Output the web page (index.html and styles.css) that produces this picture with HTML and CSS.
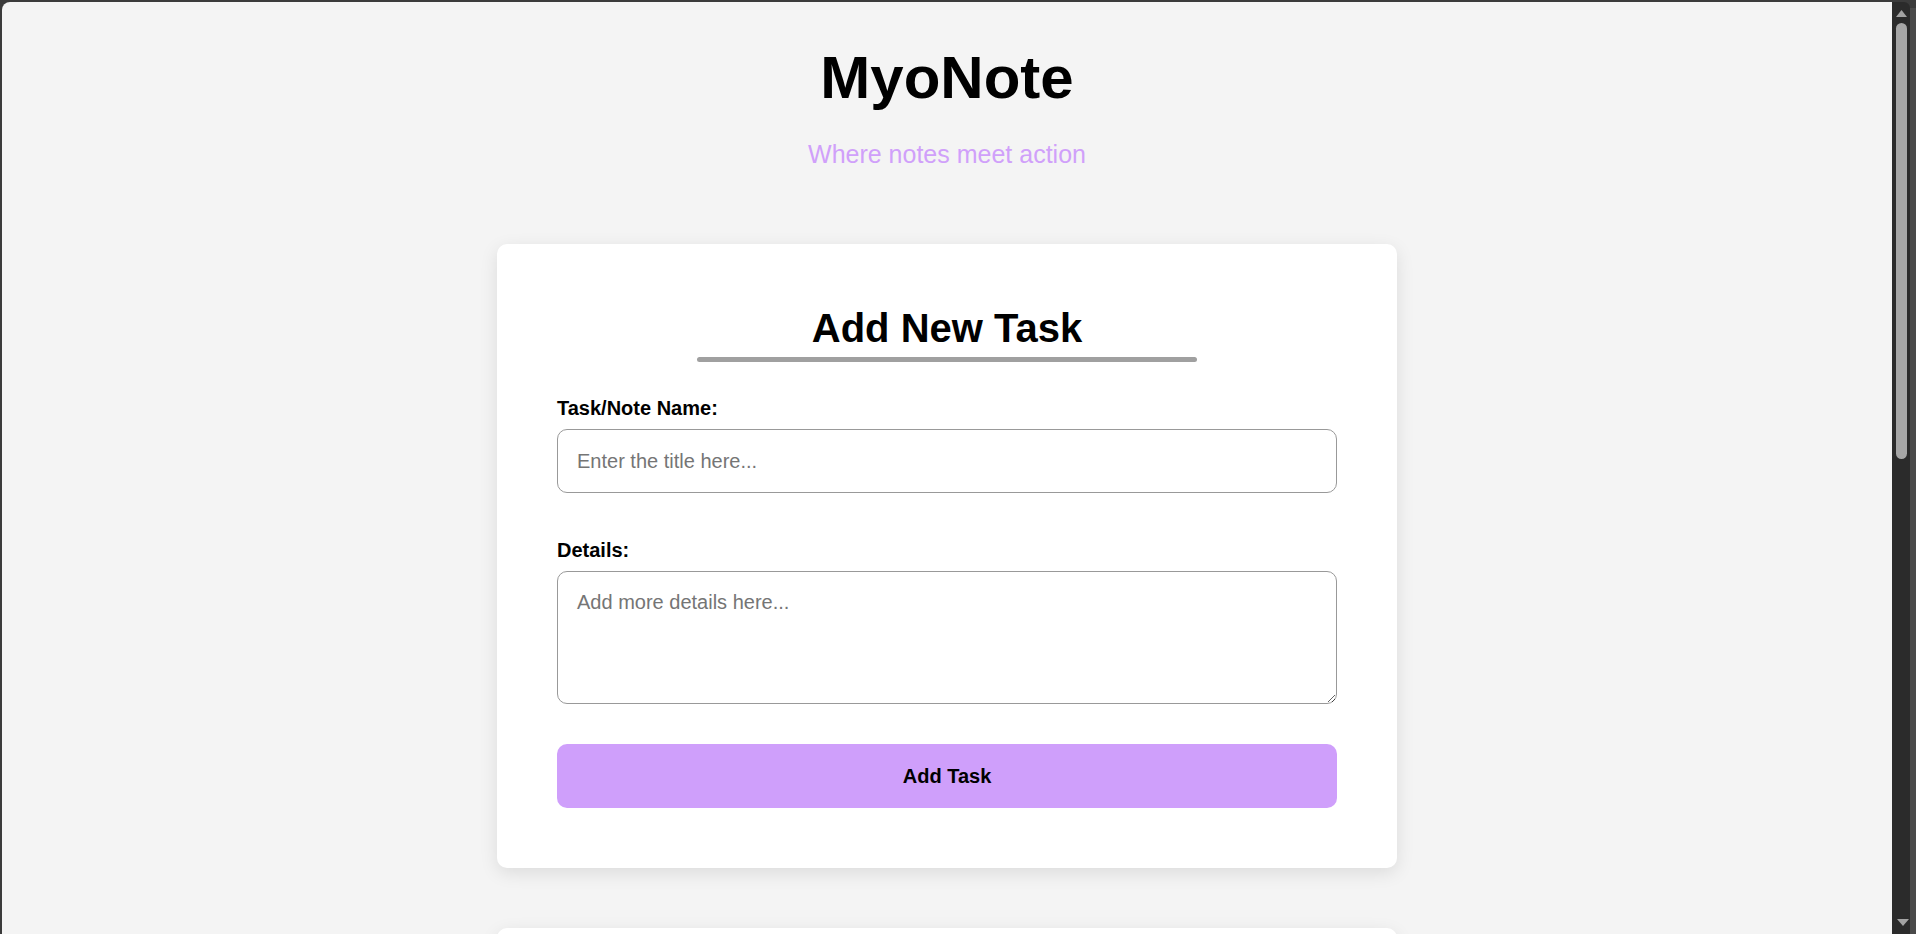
FILE: index.html
```html
<!DOCTYPE html>
<html lang="en">
<head>
<meta charset="utf-8">
<title>MyoNote</title>
<link rel="stylesheet" href="styles.css">
</head>
<body>
<div class="window">
  <main class="page">
    <header class="masthead">
      <h1 class="brand">MyoNote</h1>
      <p class="tagline">Where notes meet action</p>
    </header>

    <section class="card">
      <h2 class="card-title">Add New Task</h2>
      <form class="task-form">
        <label class="field-label" for="title">Task/Note Name:</label>
        <input class="field-input" id="title" type="text" placeholder="Enter the title here...">

        <label class="field-label field-label-spaced" for="details">Details:</label>
        <textarea class="field-textarea" id="details" placeholder="Add more details here..."></textarea>

        <button class="submit-btn" type="button">Add Task</button>
      </form>
    </section>

    <section class="card card-list"></section>
  </main>

  <div class="scrollbar" aria-hidden="true">
    <div class="scroll-track">
      <svg class="scroll-arrow" width="11" height="8" viewBox="0 0 11 8"><polygon points="5.5,0 11,7 0,7" fill="#a3a3a3"/></svg>
      <div class="scroll-thumb"></div>
      <div class="scroll-spacer"></div>
      <svg class="scroll-arrow" width="12" height="7" viewBox="0 0 12 7"><polygon points="0,0 12,0 6,7" fill="#a3a3a3"/></svg>
    </div>
    <div class="scroll-edge"></div>
  </div>
</div>
</body>
</html>
```

FILE: styles.css
```css
html, body {
  margin: 0;
  padding: 0;
  height: 100%;
  overflow: hidden;
  background: #3b3b3b;
}

body {
  font-family: "Liberation Sans", Arial, sans-serif;
  color: #000;
}

.window {
  display: flex;
  height: 100vh;
  padding: 2px 0 0 2px;
  box-sizing: border-box;
}

.page {
  flex: 1;
  background: #f4f4f4;
  border-top-left-radius: 8px;
  overflow: hidden;
  padding-top: 41px;
}

.masthead {
  text-align: center;
}

.brand {
  margin: 0;
  font-size: 60px;
  line-height: 69px;
  font-weight: bold;
}

.tagline {
  margin: 28px 0 0;
  font-size: 25px;
  line-height: 29px;
  color: #d0a0fa;
}

.card {
  width: 900px;
  box-sizing: border-box;
  margin: 75px auto 0;
  padding: 60px;
  background: #fff;
  border-radius: 10px;
  box-shadow: 0 5px 18px rgba(0, 0, 0, 0.1);
}

.card-list {
  margin-top: 60px;
  min-height: 300px;
}

.card-title {
  margin: 0;
  padding-top: 1px;
  font-size: 40px;
  line-height: 46px;
  font-weight: bold;
  text-align: center;
}

.card-title::after {
  content: "";
  display: block;
  width: 500px;
  height: 5px;
  margin: 6px auto 0;
  background: #a0a0a0;
  border-radius: 3px;
}

.task-form {
  display: flex;
  flex-direction: column;
  margin-top: 35px;
}

.field-label {
  display: block;
  font-size: 20px;
  line-height: 23px;
  font-weight: bold;
  margin-bottom: 9px;
}

.field-label-spaced {
  margin-top: 46px;
}

.field-input,
.field-textarea {
  width: 100%;
  box-sizing: border-box;
  border: 1px solid #999;
  border-radius: 10px;
  background: #fff;
  font-family: "Liberation Sans", Arial, sans-serif;
  font-size: 20px;
  line-height: 23px;
  color: #000;
  outline: none;
}

.field-input {
  height: 64px;
  padding: 0 19px;
}

.field-textarea {
  height: 133px;
  padding: 19px;
  resize: vertical;
}

.field-input::placeholder,
.field-textarea::placeholder {
  color: #757575;
}

.submit-btn {
  margin-top: 40px;
  height: 64px;
  width: 100%;
  border: none;
  border-radius: 10px;
  background: #cf9ffb;
  font-family: "Liberation Sans", Arial, sans-serif;
  font-size: 20px;
  font-weight: bold;
  color: #000;
  cursor: pointer;
}

.scrollbar {
  display: flex;
  width: 24px;
  margin-top: -2px;
  background: #3b3b3b;
}

.scroll-track {
  width: 18px;
  margin-top: 2px;
  background: #2b2b2b;
  border-top-right-radius: 6px;
  display: flex;
  flex-direction: column;
  align-items: center;
}

.scroll-arrow {
  display: block;
  flex: none;
}

.scroll-track > .scroll-arrow:first-child {
  margin-top: 8px;
  margin-left: 1px;
}

.scroll-track > .scroll-arrow:last-child {
  margin-bottom: 8px;
  margin-left: 3px;
}

.scroll-thumb {
  width: 11px;
  height: 436px;
  margin-top: 5px;
  margin-left: 1px;
  background: #a6a6a6;
  border-radius: 6px;
}

.scroll-spacer {
  flex: 1;
}

.scroll-edge {
  flex: 1;
  background: #4a4a4a;
  margin-top: 8px;
}
```
